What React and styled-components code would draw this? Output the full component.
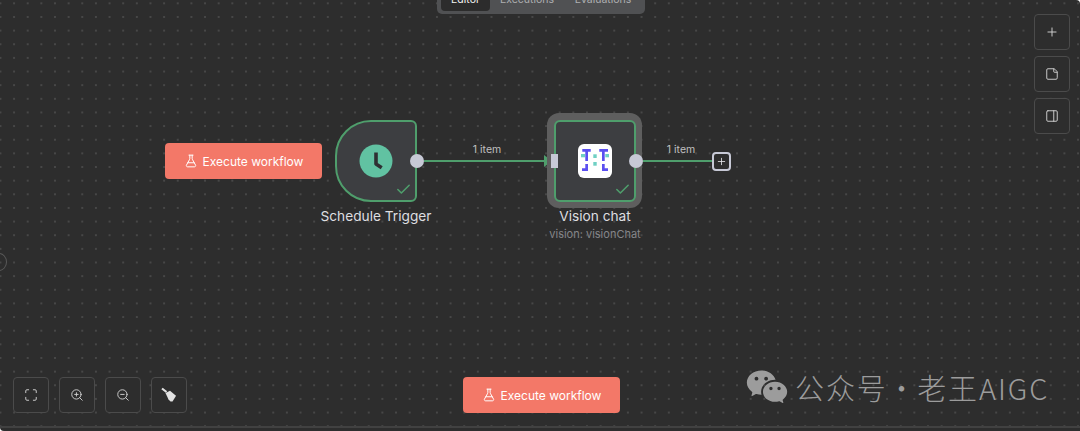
import React from "react";
import styled, { createGlobalStyle } from "styled-components";
import { FlaskConical, Maximize, ZoomIn, ZoomOut, Plus, StickyNote, PanelRight, Check } from "lucide-react";
import { RiWechatFill } from "react-icons/ri";

const Global = createGlobalStyle`
  html, body { margin: 0; padding: 0; background: #fff; }
  body { font-family: Inter, "Liberation Sans", sans-serif; }
`;

const Canvas = styled.main`
  position: relative;
  width: 1080px;
  height: 431px;
  overflow: hidden;
  background-color: #2d2d2d;
  background-image: radial-gradient(circle at center, #747474 0, #747474 0.5px, transparent 0.8px);
  background-size: 13.65px 13.65px;
  background-position: -6.4px -3.5px;
  border-radius: 0 4px 0 4px;
`;

const BottomEdge = styled.div`
  position: absolute;
  left: 0;
  right: 0;
  bottom: 3px;
  height: 2px;
  background: #414141;
`;

const Tabs = styled.nav`
  position: absolute;
  left: 437px;
  top: -16px;
  width: 208px;
  height: 30px;
  box-sizing: border-box;
  padding: 3px 4px;
  display: flex;
  background: #505153;
  border-radius: 5px;
`;

const Tab = styled.div`
  flex: 0 0 ${(p) => p.$w}px;
  height: 24px;
  display: flex;
  align-items: center;
  justify-content: center;
  border-radius: 4px;
  font-size: 10.5px;
  font-weight: 400;
  color: ${(p) => (p.$active ? "#f2f2f2" : "#aeafb1")};
  background: ${(p) => (p.$active ? "#2c2c2c" : "transparent")};
`;

const ToolRow = styled.div`
  position: absolute;
  left: 13px;
  top: 377px;
  display: flex;
  gap: 10px;
`;

const ToolColumn = styled.div`
  position: absolute;
  left: 1034px;
  top: 14px;
  display: flex;
  flex-direction: column;
  gap: 6px;
`;

const ToolButton = styled.button`
  width: 36px;
  height: 36px;
  padding: 0;
  box-sizing: border-box;
  display: flex;
  align-items: center;
  justify-content: center;
  background: #2d2d2d;
  border: 1px solid #4b4b4b;
  border-radius: 4px;
  color: #d3d3d3;
`;

const ExecuteButton = styled.button`
  position: absolute;
  left: ${(p) => p.$x}px;
  top: ${(p) => p.$y}px;
  width: 157px;
  height: 36px;
  padding: 0;
  box-sizing: border-box;
  display: flex;
  align-items: center;
  justify-content: center;
  gap: 5px;
  background: #f37868;
  border: 0;
  border-radius: 4px;
  color: #fff;
  font-family: inherit;
  font-size: 12px;
  font-weight: 400;
`;

const Edges = styled.svg`
  position: absolute;
  left: 0;
  top: 0;
`;

const EdgeLabel = styled.span`
  position: absolute;
  left: ${(p) => p.$x}px;
  top: 143px;
  width: 60px;
  margin-left: -30px;
  text-align: center;
  font-size: 10.5px;
  line-height: 14px;
  color: #c0c0c0;
`;

const TriggerNode = styled.div`
  position: absolute;
  left: 335px;
  top: 120px;
  width: 82px;
  height: 82px;
  box-sizing: border-box;
  display: flex;
  align-items: center;
  justify-content: center;
  background: #3d3e41;
  border: 2px solid #4f9e6c;
  border-radius: 36px 6px 6px 36px;
`;

const Halo = styled.div`
  position: absolute;
  left: 547px;
  top: 113px;
  width: 95px;
  height: 95px;
  box-sizing: border-box;
  padding: 7px 6px 6px 7px;
  background: #5e5e5e;
  border-radius: 12px;
`;

const VisionNode = styled.div`
  position: relative;
  width: 82px;
  height: 82px;
  box-sizing: border-box;
  display: flex;
  align-items: center;
  justify-content: center;
  background: #3d3e41;
  border: 2px solid #4f9e6c;
  border-radius: 6px;
`;

const Done = styled(Check)`
  position: absolute;
  right: 3px;
  bottom: 2px;
  color: #4f9e6c;
`;

const Port = styled.div`
  position: absolute;
  left: ${(p) => p.$x - 7}px;
  top: 154px;
  width: 14px;
  height: 14px;
  border-radius: 50%;
  background: #c7c9d6;
`;

const InputPort = styled.div`
  position: absolute;
  left: 551px;
  top: 154px;
  width: 7px;
  height: 14px;
  background: #c7c9d6;
`;

const AddButton = styled.div`
  position: absolute;
  left: 712px;
  top: 152px;
  width: 19px;
  height: 19px;
  box-sizing: border-box;
  display: flex;
  align-items: center;
  justify-content: center;
  background: #2d2d2d;
  border: 2px solid #c7c9d6;
  border-radius: 4px;
  color: #e4e4e8;
`;

const NodeName = styled.div`
  position: absolute;
  left: ${(p) => p.$x - 80}px;
  top: 207px;
  width: 160px;
  text-align: center;
  font-size: 13.7px;
  line-height: 18px;
  font-weight: 400;
  color: #dedee0;
`;

const NodeSub = styled.div`
  position: absolute;
  left: 515px;
  top: 227px;
  width: 160px;
  text-align: center;
  font-size: 11px;
  line-height: 15px;
  color: #85868a;
`;

const CutCircle = styled.div`
  position: absolute;
  left: -9px;
  top: 253px;
  width: 14px;
  height: 16px;
  border: 1px solid #595959;
  border-radius: 50%;
`;

const Watermark = styled.div`
  position: absolute;
  left: 745px;
  top: 366px;
  display: flex;
  align-items: center;
  gap: 6px;
  height: 42px;
  color: #9c9c9c;
  font-family: "Noto Sans CJK SC", "Noto Sans", sans-serif;
  font-size: 29px;
  font-weight: 300;
  letter-spacing: 1.9px;
  word-spacing: -9px;
  white-space: nowrap;
`;

const Wechat = styled(RiWechatFill)`
  flex: none;
`;

const ClockIcon = () => (
  <svg width="34" height="34" viewBox="0 0 34 34">
    <circle cx="17" cy="17" r="16.5" fill="#61c2a2" />
    <path d="M17 8.5 V20 L22.7 23.7" fill="none" stroke="#2f3033" strokeWidth="3.6" strokeLinejoin="round" />
  </svg>
);

const BroomIcon = () => (
  <svg width="16" height="16" viewBox="0 0 16 16">
    <path d="M1 1.5 L5.5 5" stroke="#e2e2e2" strokeWidth="2.2" fill="none" />
    <path d="M4.5 6 L9 3.8 L15 8.8 L14 10.5 L11.5 14.5 L9.5 14.5 L7.5 12.5 Z" fill="#e2e2e2" />
  </svg>
);

const VisionIcon = () => (
  <svg width="34" height="34" viewBox="0 0 34 34">
    <rect width="34" height="34" rx="6" fill="#fff" />
    <g fill="#5b4ff0">
      <path d="M4.3 5H12.7V7.7H10V17H7.3V7.7H4.3Z" />
      <path d="M21.3 5H30V7.7H26.7V17H24V7.7H21.3Z" />
      <path d="M7.3 20H10V27H4V24.3H7.3Z" />
      <path d="M24 20H26.7V24.3H30V27H24Z" />
    </g>
    <g fill="#6fd0c4">
      <rect x="3" y="10" width="4" height="3.3" />
      <rect x="27.3" y="10" width="3.7" height="3.3" />
      <rect x="15.3" y="10.3" width="3.4" height="3.7" />
      <rect x="15.3" y="18" width="3.4" height="3.7" />
    </g>
  </svg>
);

export default function App() {
  return (
    <Canvas>
      <Global />
      <BottomEdge />
      <CutCircle />

      <Tabs>
        <Tab $w={49} $active>Editor</Tab>
        <Tab $w={74}>Executions</Tab>
        <Tab $w={78}>Evaluations</Tab>
      </Tabs>

      <ToolColumn>
        <ToolButton><Plus size={14} strokeWidth={1.6} /></ToolButton>
        <ToolButton><StickyNote size={14} strokeWidth={1.6} /></ToolButton>
        <ToolButton><PanelRight size={14} strokeWidth={1.6} /></ToolButton>
      </ToolColumn>

      <ExecuteButton $x={165} $y={143}>
        <FlaskConical size={14} strokeWidth={1.7} />
        Execute workflow
      </ExecuteButton>

      <Edges width="1080" height="431" viewBox="0 0 1080 431">
        <path d="M424 161H548M643 161H713" stroke="#4f9e6c" strokeWidth="2" fill="none" />
        <path d="M544 155L552 161L544 167Z" fill="#4f9e6c" />
      </Edges>
      <EdgeLabel $x={487}>1 item</EdgeLabel>
      <EdgeLabel $x={681}>1 item</EdgeLabel>

      <TriggerNode>
        <ClockIcon />
        <Done size={17} strokeWidth={2.2} />
      </TriggerNode>
      <Port $x={417} />
      <NodeName $x={376}>Schedule Trigger</NodeName>

      <Halo>
        <VisionNode>
          <VisionIcon />
          <Done size={17} strokeWidth={2.2} />
        </VisionNode>
      </Halo>
      <InputPort />
      <Port $x={636} />
      <AddButton><Plus size={11} strokeWidth={1.8} /></AddButton>
      <NodeName $x={595}>Vision chat</NodeName>
      <NodeSub>vision: visionChat</NodeSub>

      <ToolRow>
        <ToolButton><Maximize size={14} strokeWidth={1.6} /></ToolButton>
        <ToolButton><ZoomIn size={14} strokeWidth={1.6} /></ToolButton>
        <ToolButton><ZoomOut size={14} strokeWidth={1.6} /></ToolButton>
        <ToolButton><BroomIcon /></ToolButton>
      </ToolRow>

      <ExecuteButton $x={463} $y={377}>
        <FlaskConical size={14} strokeWidth={1.7} />
        Execute workflow
      </ExecuteButton>

      <Watermark>
        <Wechat size={44} />
        公众号 · 老王AIGC
      </Watermark>
    </Canvas>
  );
}
